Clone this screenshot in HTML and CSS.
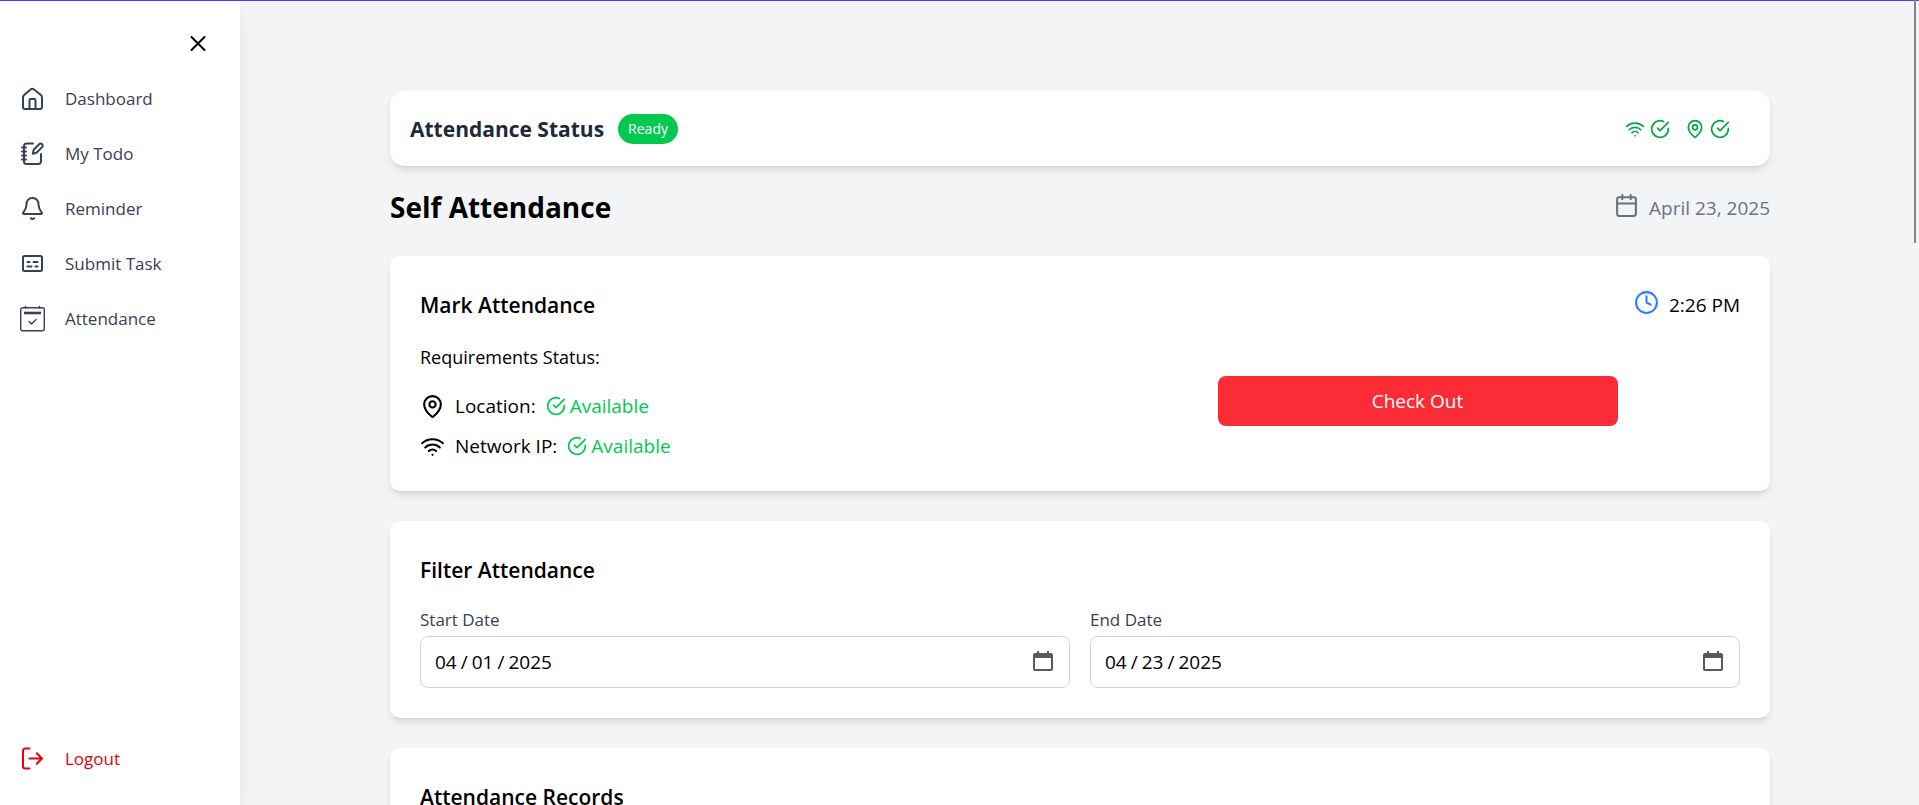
FILE: index.html
```html
<!DOCTYPE html>
<html lang="en">
<head>
<meta charset="utf-8">
<title>Self Attendance</title>
<link rel="stylesheet" href="styles.css">
</head>
<body>
<svg class="sprite" aria-hidden="true">
  <symbol id="check" viewBox="0 0 24 24"><path d="M22 11.1V12a10 10 0 1 1-5.9-9.1"/><path d="m22 4-10 10-3-3"/></symbol>
  <symbol id="pin" viewBox="0 0 24 24"><path d="M20 10c0 5-5.5 10.2-7.4 11.8a1 1 0 0 1-1.2 0C9.500 20.200 4 15 4 10a8 8 0 0 1 16 0"/><circle cx="12" cy="10" r="3"/></symbol>
  <symbol id="wifi" viewBox="0 0 24 24"><path d="M12 20h.01M2 8.800a15 15 0 0 1 20 0M5 12.900a10 10 0 0 1 14 0M8.500 16.400a5 5 0 0 1 7 0"/></symbol>
</svg>
<div class="app">
  <aside class="sidebar">
    <button class="close" type="button" aria-label="Close menu">
      <svg class="icon icon-md" viewBox="0 0 24 24"><path d="M5.500 5 18.500 18M18.500 5 5.500 18"/></svg>
    </button>
    <nav class="nav">
      <a class="nav-item" href="#"><svg class="icon icon-md" viewBox="0 0 24 24"><path d="M3 10.300c0-.9.400-1.700 1.100-2.300l6.800-5.700a2.200 2.200 0 0 1 2.800 0L20.900 8c.7.600 1.100 1.400 1.100 2.300V20a2 2 0 0 1-2 2H5a2 2 0 0 1-2-2Z"/><path d="M9.500 22v-9c0-.6.400-1 1-1h4c.6 0 1 .4 1 1v9"/></svg>Dashboard</a>
      <a class="nav-item" href="#"><svg class="icon icon-md" viewBox="0 0 24 24"><path d="M13 1.500H6.500A2.500 2.500 0 0 0 4 4v15.500A2.500 2.500 0 0 0 6.500 22h12a2.500 2.500 0 0 0 2.500-2.500V12"/><path d="M2 5.500h4M2 9.500h4M2 13.500h4M2 17.500h4"/><path d="M19.200 2.200a2 2 0 0 1 2.900 2.900l-5.600 5.600-3.800 1 1-3.900Z"/></svg>My Todo</a>
      <a class="nav-item" href="#"><svg class="icon icon-md" viewBox="0 0 24 24"><path d="M12.500 1C8.500 1 6.500 4 6.500 7.500c0 4-1.500 5.500-3.200 8-.6 1-.3 1.500.8 1.500h16.800c1.100 0 1.400-.5.800-1.500-1.700-2.500-3.200-4-3.200-8C18.500 4 16.500 1 12.500 1ZM10.800 21.300c1 .9 2.400.9 3.400 0"/></svg>Reminder</a>
      <a class="nav-item" href="#"><svg class="icon icon-md" viewBox="0 0 24 24"><rect x="3" y="4" width="19" height="15" rx="1.500"/><path d="M7.500 10h2M13.500 10h4M7.500 14.500h4M15.500 14.500h2"/></svg>Submit Task</a>
      <a class="nav-item" href="#"><svg class="icon icon-md thin" viewBox="0 0 24 24"><rect x=".7" y=".8" width="23.600" height="23" rx="2"/><path d="M5.500 -.5v1.500M19.500 -.5v1.500M9 14.500l2.500 2.500 4.500-4.500"/><path class="bar" d="M4 6h17"/></svg>Attendance</a>
    </nav>
    <button class="nav-item logout" type="button"><svg class="icon icon-md" viewBox="0 0 24 24"><path d="M9.500 1.500H5A2 2 0 0 0 3 3.500v16a2 2 0 0 0 2 2h4.500M9.500 11.500H22M16.800 6.300l5.200 5.200-5.200 5.200"/></svg>Logout</button>
  </aside>

  <main class="main">
    <section class="card status">
      <div class="status-title">
        <h2 class="status-name">Attendance Status</h2>
        <span class="badge">Ready</span>
      </div>
      <div class="signals">
        <span class="signal"><svg class="icon icon-sm"><use href="#wifi"/></svg><svg class="icon icon-sm"><use href="#check"/></svg></span>
        <span class="signal"><svg class="icon icon-sm"><use href="#pin"/></svg><svg class="icon icon-sm"><use href="#check"/></svg></span>
      </div>
    </section>

    <header class="page-head">
      <h1 class="page-title">Self Attendance</h1>
      <p class="today"><svg class="icon icon-lg" viewBox="0 0 24 24"><rect x="3" y="4" width="18" height="18" rx="2"/><path d="M8 2v4M16 2v4M3 10h18"/></svg>April 23, 2025</p>
    </header>

    <section class="card panel">
      <div class="panel-head">
        <h2 class="panel-title">Mark Attendance</h2>
        <p class="clock"><svg class="icon icon-lg" viewBox="0 0 24 24"><circle cx="12" cy="12" r="10"/><path d="M12 6v6l4 2"/></svg>2:26 PM</p>
      </div>
      <div class="mark-grid">
        <div class="requirements">
          <h3 class="req-title">Requirements Status:</h3>
          <ul class="req-list">
            <li class="req"><svg class="icon icon-lg"><use href="#pin"/></svg>Location:<span class="ok"><svg class="icon icon-sm"><use href="#check"/></svg>Available</span></li>
            <li class="req"><svg class="icon icon-lg"><use href="#wifi"/></svg>Network IP:<span class="ok"><svg class="icon icon-sm"><use href="#check"/></svg>Available</span></li>
          </ul>
        </div>
        <button class="checkout" type="button">Check Out</button>
      </div>
    </section>

    <section class="card panel">
      <h2 class="panel-title">Filter Attendance</h2>
      <div class="filter-grid">
        <div class="field">
          <label class="label" for="start">Start Date</label>
          <input class="date" id="start" type="date" value="2025-04-01">
        </div>
        <div class="field">
          <label class="label" for="end">End Date</label>
          <input class="date" id="end" type="date" value="2025-04-23">
        </div>
      </div>
    </section>

    <section class="card panel">
      <h2 class="panel-title">Attendance Records</h2>
    </section>
  </main>
</div>
<div class="scroll-thumb"></div>
</body>
</html>
```
FILE: styles.css
```css
* { box-sizing: border-box; margin: 0; padding: 0; }

body {
  font-family: "Open Sans", "Noto Sans", sans-serif;
  font-size: 19px;
  line-height: 30px;
  color: #000;
  background: #f3f4f6;
  overflow: hidden;
}

.sprite { display: none; }
button { border: 0; background: none; font: inherit; cursor: pointer; }

.app {
  display: flex;
  height: 100vh;
  border-top: 1px solid #4f39f6;
}

.icon {
  flex: none;
  fill: none;
  stroke: currentColor;
  stroke-width: 2;
  stroke-linecap: round;
  stroke-linejoin: round;
}
.icon-sm { width: 20px; height: 20px; }
.icon-md { width: 24px; height: 24px; }
.icon-lg { width: 25px; height: 25px; }
.thin { stroke-width: 1.4; overflow: visible; }
.bar { stroke-width: 2.6; stroke-linecap: butt; }

.sidebar {
  display: flex;
  flex-direction: column;
  flex: none;
  width: 240px;
  padding: 31px 20px 19px;
  background: #fff;
  box-shadow: 0 12px 19px -4px rgb(0 0 0 / 10%), 0 5px 8px -5px rgb(0 0 0 / 10%);
}
.close { align-self: flex-end; display: flex; margin-right: 10px; }
.nav { flex: 1; padding-top: 15px; }
.nav-item {
  display: flex;
  align-items: center;
  gap: 21px;
  height: 55px;
  font-size: 17px;
  color: #364153;
  text-decoration: none;
}
.logout { color: #e7000b; }

.main {
  flex: 1;
  display: flex;
  flex-direction: column;
  padding: 90px 149px 0 150px;
  overflow: hidden;
}
.card {
  flex: none;
  background: #fff;
  border-radius: 10px;
  box-shadow: 0 5px 8px -1px rgb(0 0 0 / 10%), 0 3px 5px -3px rgb(0 0 0 / 10%);
}

.status {
  display: flex;
  align-items: center;
  justify-content: space-between;
  padding: 20px 40px 20px 20px;
  height: 75px;
  border-radius: 15px;
}
.status-title { display: flex; align-items: center; gap: 14px; }
.status-name { font-size: 21px; font-weight: 700; color: #1e2939; }
.badge {
  padding: 0 10px;
  border-radius: 15px;
  font-size: 14px;
  color: #fff;
  background: #00c950;
}
.signals { display: flex; gap: 15px; color: #00a63e; }
.signal { display: flex; gap: 5px; }

.page-head {
  display: flex;
  align-items: center;
  justify-content: space-between;
  padding: 19px 0 26px;
}
.page-title { font-size: 28px; font-weight: 700; line-height: 45px; }
.today { display: flex; align-items: flex-start; gap: 10px; color: #6a7282; }

.panel { padding: 30px; margin-bottom: 30px; }
.panel-head { display: flex; align-items: center; justify-content: space-between; }
.panel-title { font-size: 21px; font-weight: 600; line-height: 38px; }
.clock { display: flex; align-items: flex-start; gap: 10px; }
.clock .icon { color: #2b7fff; }

.mark-grid {
  display: grid;
  grid-template-columns: 1fr 1fr;
  gap: 30px;
  align-items: center;
  padding-top: 18px;
}
.req-title { font-size: 18px; font-weight: 400; }
.req-list { display: grid; gap: 10px; padding-top: 19px; list-style: none; }
.req { display: flex; align-items: center; gap: 10px; }
.ok { display: flex; align-items: center; gap: 4px; color: #00c950; }
.checkout {
  justify-self: center;
  width: 400px;
  max-width: 100%;
  height: 50px;
  margin-bottom: 2px;
  border-radius: 8px;
  color: #fff;
  background: #fb2c36;
}

.filter-grid {
  display: grid;
  grid-template-columns: 1fr 1fr;
  gap: 20px;
  padding-top: 19px;
}
.field { display: flex; flex-direction: column; gap: 5px; }
.label { font-size: 17px; line-height: 23px; color: #364153; }
.date {
  width: 100%;
  height: 52px;
  padding: 0 13px;
  border: 1px solid #d1d5dc;
  border-radius: 8px;
  font: inherit;
  background: #fff;
}
.date::-webkit-datetime-edit-text { padding: 0 3px; }
.date::-webkit-calendar-picker-indicator {
  width: 24px;
  height: 24px;
  padding: 0;
  background: url("data:image/svg+xml,%3Csvg xmlns='http://www.w3.org/2000/svg' viewBox='0 0 24 24'%3E%3Cpath fill='%23595959' fill-rule='evenodd' d='M5 1h2v2h8V1h2v2h2a2 2 0 0 1 2 2v14a2 2 0 0 1-2 2H3a2 2 0 0 1-2-2V5a2 2 0 0 1 2-2h2zM3 8v11h16V8z'/%3E%3C/svg%3E") center / contain no-repeat;
}

.scroll-thumb {
  position: absolute;
  top: 0;
  right: 3px;
  width: 2px;
  height: 243px;
  background: #858585;
}
```
